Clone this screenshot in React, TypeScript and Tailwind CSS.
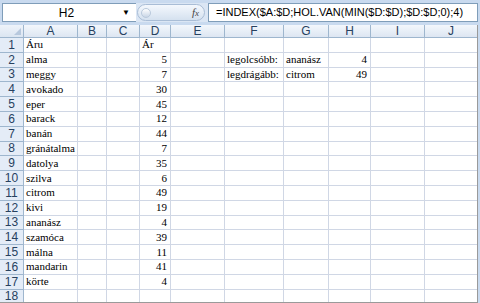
import React from "react";

const cols = [
  { name: "A", w: 54 },
  { name: "B", w: 29 },
  { name: "C", w: 33 },
  { name: "D", w: 31 },
  { name: "E", w: 54 },
  { name: "F", w: 59 },
  { name: "G", w: 45 },
  { name: "H", w: 42 },
  { name: "I", w: 54 },
  { name: "J", w: 53 },
];

const fruits: [string, number][] = [
  ["alma", 5],
  ["meggy", 7],
  ["avokado", 30],
  ["eper", 45],
  ["barack", 12],
  ["banán", 44],
  ["gránátalma", 7],
  ["datolya", 35],
  ["szilva", 6],
  ["citrom", 49],
  ["kivi", 19],
  ["ananász", 4],
  ["szamóca", 39],
  ["málna", 11],
  ["mandarin", 41],
  ["körte", 4],
];

type Cell = { v: string; num?: boolean };

const buildRows = () => {
  const rows: Record<string, Cell>[] = [];
  rows.push({ A: { v: "Áru" }, D: { v: "Ár" } });
  fruits.forEach(([name, price]) => {
    rows.push({ A: { v: name }, D: { v: String(price), num: true } });
  });
  rows.push({});
  rows[1].F = { v: "legolcsóbb:" };
  rows[1].G = { v: "ananász" };
  rows[1].H = { v: "4", num: true };
  rows[2].F = { v: "legdrágább:" };
  rows[2].G = { v: "citrom" };
  rows[2].H = { v: "49", num: true };
  return rows;
};

const gridCols =
  "grid grid-cols-[24px_54px_29px_33px_31px_54px_59px_45px_42px_54px_53px]";

export default function App() {
  const rows = buildRows();
  return (
    <div className="w-[480px] h-[303px] overflow-hidden bg-[#c9daef] pt-[3px] flex flex-col font-['Liberation_Sans',sans-serif]">
      {/* formula bar */}
      <div className="flex h-[19px] pl-[2px] pr-[2px]">
        <div className="w-[134px] bg-white border-l border-t border-b border-[#7f9db9] flex items-center">
          <span className="flex-1 text-center text-[12px] text-black pl-[8px]">H2</span>
          <span className="w-[14px] text-[8px] text-black leading-none">▼</span>
        </div>
        <div className="w-[72px] bg-[#dbe6f4] flex items-center pl-[1px]">
          <div className="h-[17px] w-[68px] rounded-[9px] border border-[#a9bdd6] bg-gradient-to-b from-[#f4f8fd] to-[#d5e1ef] flex items-center justify-between px-[3px]">
            <span className="w-[10px] h-[10px] rounded-full bg-gradient-to-b from-[#ffffff] to-[#c9d6e6] border border-[#b9c9dc]" />
            <span className="text-[11px] italic text-[#444] font-['Liberation_Serif',serif] pr-[2px]">
              f<span className="text-[9px]">x</span>
            </span>
          </div>
        </div>
        <div className="flex-1 bg-white border border-[#7f9db9] flex items-center pl-[7px] text-[11px] text-black whitespace-nowrap overflow-hidden">
          =INDEX($A:$D;HOL.VAN(MIN($D:$D);$D:$D;0);4)
        </div>
      </div>
      <div className="h-[3px]" />
      {/* sheet */}
      <div className="flex-1 bg-white overflow-hidden border-b border-[#9a9a9a] w-[478px] border-r">
        <div className={`${gridCols} h-[13px]`}>
          <div className="relative bg-gradient-to-b from-[#eef3fa] to-[#dbe5f1] border-r border-b border-[#9eb6ce]">
            <span className="absolute right-[2px] bottom-[2px] w-0 h-0 border-l-[7px] border-l-transparent border-b-[7px] border-b-[#b7c8dd]" />
          </div>
          {cols.map((c) => (
            <div
              key={c.name}
              className="bg-gradient-to-b from-[#f3f7fc] to-[#dde6f2] border-r border-b border-[#9eb6ce] flex items-center justify-center text-[12px] text-[#27415f] leading-none"
            >
              {c.name}
            </div>
          ))}
        </div>
        {rows.map((r, i) => (
          <div key={i} className={`${gridCols} h-[14.8px]`}>
            <div className="bg-[#e4ecf7] border-r border-b border-[#9eb6ce] flex items-center justify-center text-[12px] text-[#27415f] leading-none">
              {i + 1}
            </div>
            {cols.map((c) => {
              const cell = r[c.name];
              return (
                <div
                  key={c.name}
                  className={`border-r border-b border-[#d0d7e5] flex items-center px-[2px] text-[11px] text-black leading-none font-['Liberation_Serif',serif] whitespace-nowrap ${
                    cell?.num ? "justify-end pr-[3px]" : "justify-start"
                  }`}
                >
                  {cell?.v}
                </div>
              );
            })}
          </div>
        ))}
      </div>
    </div>
  );
}
